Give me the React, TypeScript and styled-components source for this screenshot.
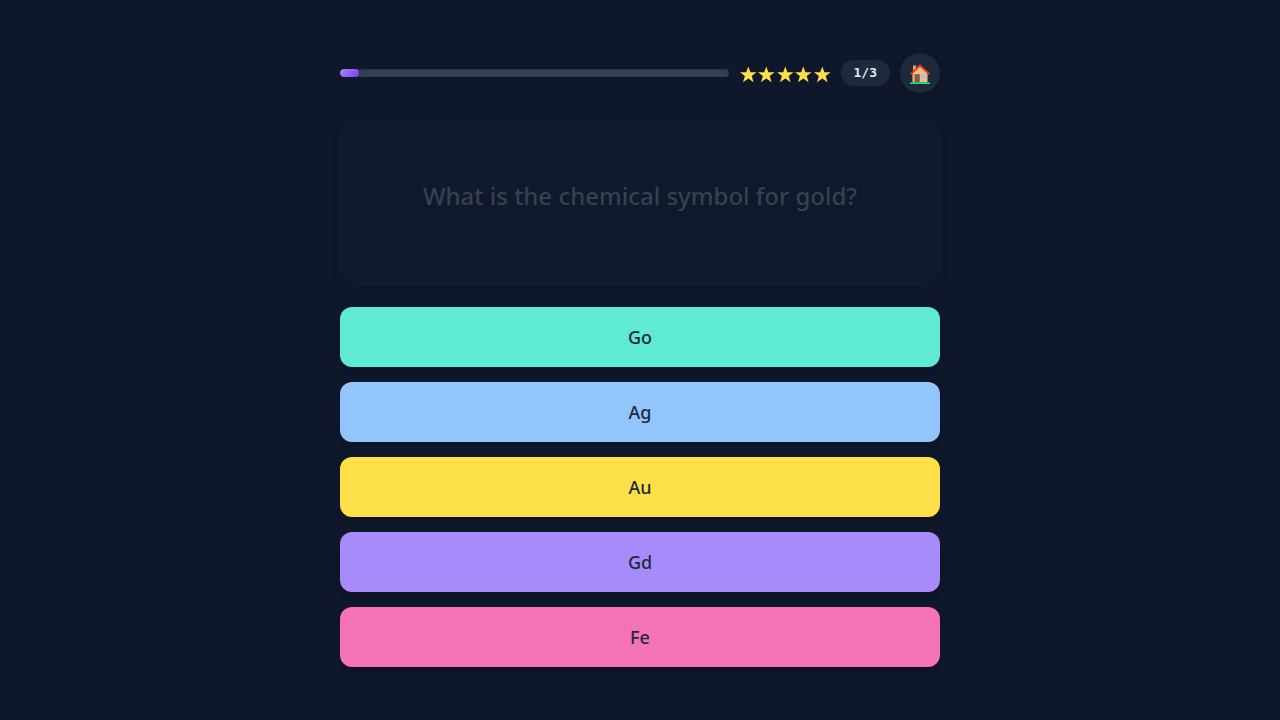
import React from "react";
import styled, { createGlobalStyle } from "styled-components";

const Global = createGlobalStyle`
  *, *::before, *::after { box-sizing: border-box; }
  body {
    margin: 0;
    background: #0f172a;
    color: #e2e8f0;
    font-family: "Noto Sans", sans-serif;
  }
`;

const Page = styled.main`
  min-height: 100vh;
  display: flex;
  flex-direction: column;
  justify-content: center;
  align-items: center;
  padding: 24px;
`;

const Quiz = styled.div`
  width: 100%;
  max-width: 600px;
  display: flex;
  flex-direction: column;
`;

const TopBar = styled.header`
  display: flex;
  align-items: center;
  gap: 10px;
  margin-bottom: 28px;
`;

const Track = styled.div`
  flex: 1;
  height: 8px;
  border-radius: 4px;
  background: #334155;
  box-shadow: inset 0 1px 3px rgba(0, 0, 0, 0.2);
  overflow: hidden;
`;

const Fill = styled.div`
  height: 100%;
  border-radius: 4px;
  background: linear-gradient(135deg, #a78bfa, #7c3aed);
  box-shadow: 0 0 10px rgba(0, 0, 0, 0.3);
`;

const Stars = styled.div`
  display: flex;
  justify-content: space-between;
  width: 92px;
  padding-top: 4px;
`;

const StarIcon = styled.svg`
  width: 18px;
  height: 18px;
  fill: #fde047;
`;

const Counter = styled.span`
  padding: 4px 13px;
  border-radius: 13px;
  background: #1e293b;
  font-family: "DejaVu Sans Mono", monospace;
  font-size: 13px;
  line-height: 18px;
  font-weight: 700;
`;

const HomeButton = styled.button`
  display: grid;
  place-items: center;
  width: 40px;
  height: 40px;
  padding: 0;
  border: 0;
  border-radius: 50%;
  background: #1e293b;
  box-shadow: 0 2px 5px rgba(0, 0, 0, 0.2);
  cursor: pointer;
`;

const Card = styled.section`
  display: flex;
  justify-content: center;
  min-height: 164px;
  margin-bottom: 22px;
  padding: 56px 24px;
  border: 1px solid #151e30;
  border-radius: 16px;
  background: #10192b;
  box-shadow: 0 4px 12px rgba(0, 0, 0, 0.08);
`;

const Question = styled.h1`
  margin: 0;
  font-size: 24px;
  line-height: 36px;
  font-weight: 500;
  color: #37404f;
  text-align: center;
`;

const Answers = styled.div`
  display: flex;
  flex-direction: column;
  gap: 15px;
`;

const Answer = styled.button<{ $color: string }>`
  height: 60px;
  padding: 0 16px;
  border: 0;
  border-radius: 12px;
  background: ${(p) => p.$color};
  box-shadow: 0 4px 6px rgba(0, 0, 0, 0.15);
  color: #1e293b;
  font-family: inherit;
  font-size: 18px;
  font-weight: 500;
  cursor: pointer;
`;

const answers = [
  { label: "Go", color: "#5eead4" },
  { label: "Ag", color: "#93c5fd" },
  { label: "Au", color: "#fde047" },
  { label: "Gd", color: "#a78bfa" },
  { label: "Fe", color: "#f472b6" },
];

const Star = () => (
  <StarIcon viewBox="0 0 18 18" aria-hidden="true">
    <path d="M9.300.6l2.100 5.700h6.200l-4.900 3.800 1.900 6.100-5.300-3.700L4 16.200l1.900-6.100L1 6.300h6.200z" />
  </StarIcon>
);

const House = () => (
  <svg width="22" height="22" viewBox="0 0 22 22" aria-hidden="true">
    <path d="M4 3.500h3.200V10H4z" fill="#dba463" />
    <path d="M3.500 11L11 4l7.500 7v9.500h-15z" fill="#f2bd78" />
    <path d="M5.500 12.200h5.300v8.300H5.500z" fill="#8d5544" />
    <path d="M12.200 12h4.600v4.500h-4.600z" fill="#90caf9" />
    <path d="M1.700 12.200L11 3.600l9.300 8.600" fill="none" stroke="#f0322f" strokeWidth="1.900" />
    <path d="M1 20.500h20V22H1z" fill="#00f58a" />
  </svg>
);

export default function App() {
  const progress = 5;
  return (
    <>
      <Global />
      <Page>
        <Quiz>
          <TopBar>
            <Track role="progressbar" aria-label="Progress" aria-valuenow={progress}>
              <Fill style={{ width: `${progress}%` }} />
            </Track>
            <Stars role="img" aria-label="5 stars">
              {[1, 2, 3, 4, 5].map((n) => <Star key={n} />)}
            </Stars>
            <Counter>1/3</Counter>
            <HomeButton aria-label="Home"><House /></HomeButton>
          </TopBar>
          <Card>
            <Question>What is the chemical symbol for gold?</Question>
          </Card>
          <Answers>
            {answers.map((a) => (
              <Answer key={a.label} $color={a.color}>{a.label}</Answer>
            ))}
          </Answers>
        </Quiz>
      </Page>
    </>
  );
}
